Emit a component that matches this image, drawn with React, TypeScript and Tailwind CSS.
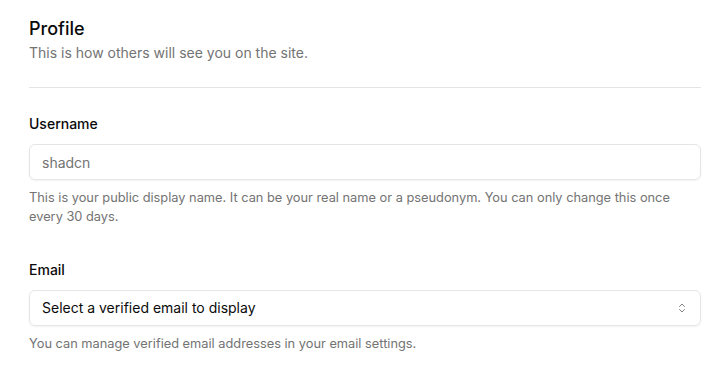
import { ChevronsUpDown } from 'lucide-react'

export default function App() {
  return (
    <div className="min-h-screen bg-white font-['Inter',sans-serif] text-[#0a0a0a]">
      <div className="w-[672px] pl-[29px] pt-[15px] box-content">
        <div>
          <h3 className="text-lg leading-7 font-medium">Profile</h3>
          <p className="text-sm leading-5 text-[#737373]">This is how others will see you on the site.</p>
        </div>
        <div className="mt-6 h-px w-full bg-[#e5e5e5]" />

        <form className="mt-[29px]">
          <div className="flex flex-col">
            <label className="text-sm leading-none font-medium">Username</label>
            <input
              placeholder="shadcn"
              className="mt-[13px] h-9 w-full rounded-md border border-[#e5e5e5] bg-transparent px-3 text-sm shadow-xs outline-none placeholder:text-[#737373]"
            />
            <p className="mt-2 text-[0.8rem] leading-[19.2px] text-[#737373]">
              This is your public display name. It can be your real name or a pseudonym. You can only change this once every 30 days.
            </p>
          </div>

          <div className="mt-[37px] flex flex-col">
            <label className="text-sm leading-none font-medium">Email</label>
            <button
              type="button"
              className="mt-[13px] flex h-9 w-full items-center justify-between rounded-md border border-[#e5e5e5] bg-transparent px-3 text-sm shadow-xs"
            >
              <span>Select a verified email to display</span>
              <ChevronsUpDown className="h-3 w-3 text-[#0a0a0a] opacity-50" strokeWidth={2} />
            </button>
            <p className="mt-2 text-[0.8rem] leading-[19.2px] text-[#737373]">
              You can manage verified email addresses in your email settings.
            </p>
          </div>
        </form>
      </div>
    </div>
  )
}
